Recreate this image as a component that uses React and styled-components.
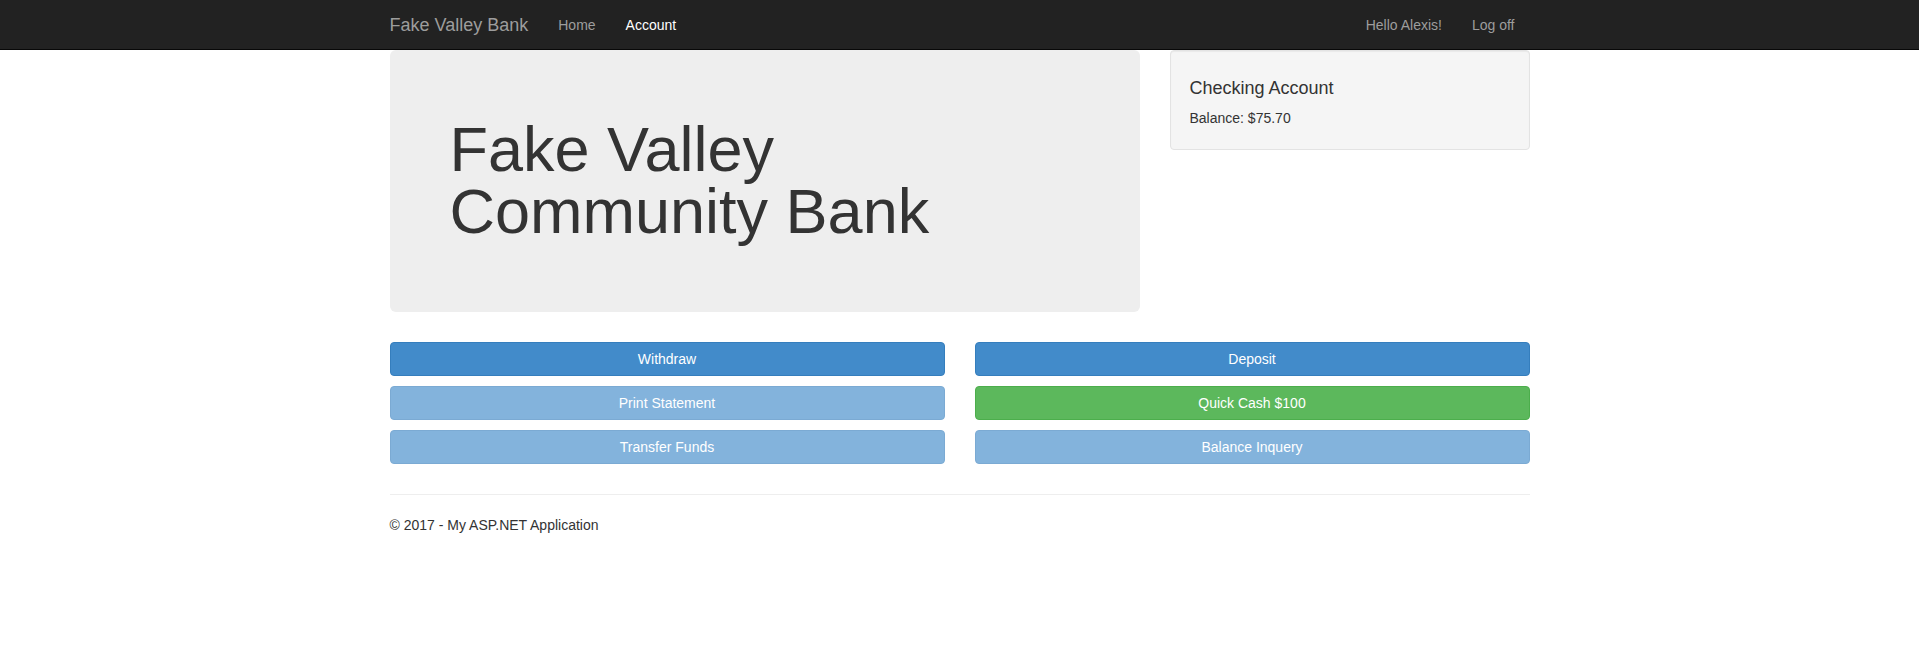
import React from "react";
import styled, { createGlobalStyle, css } from "styled-components";

const GlobalStyle = createGlobalStyle`
  html, body { margin: 0; padding: 0; }
  body {
    font-family: "Liberation Sans", Arial, Helvetica, sans-serif;
    font-size: 14px;
    line-height: 1.428571;
    color: #333;
    background: #fff;
  }
  * { box-sizing: border-box; }
`;

const Navbar = styled.header`
  height: 50px;
  background: #222;
  border-bottom: 1px solid #080808;
`;

const NavInner = styled.nav`
  width: 1140px;
  margin: 0 auto;
  display: flex;
  align-items: center;
  height: 49px;
`;

const Brand = styled.a`
  font-size: 18px;
  line-height: 20px;
  padding: 15px 15px 14px 0;
  color: #9d9d9d;
  text-decoration: none;
`;

const NavList = styled.ul`
  display: flex;
  list-style: none;
  margin: 0;
  padding: 0;
  margin-left: ${(p) => (p.$right ? "auto" : "0")};
`;

const NavLink = styled.a`
  display: block;
  padding: 15px 15px 14px;
  line-height: 20px;
  color: ${(p) => (p.$active ? "#fff" : "#9d9d9d")};
  text-decoration: none;
`;

const Main = styled.main`
  width: 1140px;
  margin: 0 auto;
`;

const TopRow = styled.div`
  display: flex;
  gap: 30px;
  align-items: flex-start;
`;

const Jumbotron = styled.section`
  width: 750px;
  padding: 48px 60px 60px;
  background: #eee;
  border-radius: 6px;
`;

const Title = styled.h1`
  margin: 20px 0 10px;
  font-size: 63px;
  line-height: 62px;
  font-weight: 400;
  color: #333;
`;

const Well = styled.aside`
  width: 360px;
  padding: 19px 19px 20px;
  background: #f5f5f5;
  border: 1px solid #e3e3e3;
  border-radius: 4px;
  box-shadow: inset 0 1px 1px rgba(0, 0, 0, 0.05);
`;

const WellTitle = styled.h4`
  margin: 9px 0 10px;
  font-size: 18px;
  line-height: 1.1;
  font-weight: 400;
`;

const WellText = styled.p`
  margin: 0;
`;

const ButtonGrid = styled.div`
  margin-top: 30px;
  display: grid;
  grid-template-columns: 1fr 1fr;
  column-gap: 30px;
  row-gap: 10px;
`;

const variants = {
  primary: css`
    background: #428bca;
    border-color: #357ebd;
  `,
  success: css`
    background: #5cb85c;
    border-color: #4cae4c;
  `,
};

const Button = styled.button`
  display: block;
  width: 100%;
  height: 34px;
  padding: 6px 12px;
  font-family: inherit;
  font-size: 14px;
  line-height: 20px;
  color: #fff;
  border: 1px solid;
  border-radius: 4px;
  cursor: pointer;
  ${(p) => variants[p.$variant || "primary"]}
  &:disabled {
    opacity: 0.65;
    cursor: not-allowed;
  }
`;

const Footer = styled.footer`
  margin-top: 30px;
  border-top: 1px solid #eee;
`;

const FooterText = styled.p`
  margin: 21px 0 10px;
`;

export default function App() {
  return (
    <>
      <GlobalStyle />
      <Navbar>
        <NavInner>
          <Brand href="#">Fake Valley Bank</Brand>
          <NavList>
            <li><NavLink href="#">Home</NavLink></li>
            <li><NavLink href="#" $active>Account</NavLink></li>
          </NavList>
          <NavList $right>
            <li><NavLink href="#">Hello Alexis!</NavLink></li>
            <li><NavLink href="#">Log off</NavLink></li>
          </NavList>
        </NavInner>
      </Navbar>
      <Main>
        <TopRow>
          <Jumbotron>
            <Title>Fake Valley<br />Community Bank</Title>
          </Jumbotron>
          <Well>
            <WellTitle>Checking Account</WellTitle>
            <WellText>Balance: $75.70</WellText>
          </Well>
        </TopRow>
        <ButtonGrid>
          <Button>Withdraw</Button>
          <Button>Deposit</Button>
          <Button disabled>Print Statement</Button>
          <Button $variant="success">Quick Cash $100</Button>
          <Button disabled>Transfer Funds</Button>
          <Button disabled>Balance Inquery</Button>
        </ButtonGrid>
        <Footer>
          <FooterText>© 2017 - My ASP.NET Application</FooterText>
        </Footer>
      </Main>
    </>
  );
}
